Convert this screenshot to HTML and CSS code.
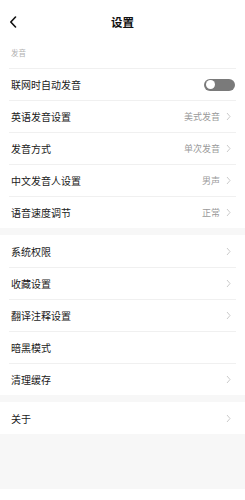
FILE: index.html
```html
<!DOCTYPE html>
<html lang="zh">
<head>
<meta charset="utf-8">
<link rel="stylesheet" href="styles.css">
</head>
<body>
<div class="page">
  <header class="header">
    <svg class="back" width="8" height="12" viewBox="0 0 8 12"><path d="M6.5 1 L1.8 6 L6.5 11" fill="none" stroke="#111" stroke-width="1.6" stroke-linecap="round" stroke-linejoin="round"/></svg>
    <div class="title">设置</div>
  </header>
  <section class="group">
    <div class="label">发音</div>
    <div class="row"><span class="name">联网时自动发音</span><span class="toggle"><span class="knob"></span></span></div>
    <div class="row"><span class="name">英语发音设置</span><span class="value">美式发音</span><svg class="chev" width="5" height="9" viewBox="0 0 5 9"><path d="M1 1 L4 4.5 L1 8" fill="none" stroke="#c4c4c4" stroke-width="0.9"/></svg></div>
    <div class="row"><span class="name">发音方式</span><span class="value">单次发音</span><svg class="chev" width="5" height="9" viewBox="0 0 5 9"><path d="M1 1 L4 4.5 L1 8" fill="none" stroke="#c4c4c4" stroke-width="0.9"/></svg></div>
    <div class="row"><span class="name">中文发音人设置</span><span class="value">男声</span><svg class="chev" width="5" height="9" viewBox="0 0 5 9"><path d="M1 1 L4 4.5 L1 8" fill="none" stroke="#c4c4c4" stroke-width="0.9"/></svg></div>
    <div class="row"><span class="name">语音速度调节</span><span class="value">正常</span><svg class="chev" width="5" height="9" viewBox="0 0 5 9"><path d="M1 1 L4 4.5 L1 8" fill="none" stroke="#c4c4c4" stroke-width="0.9"/></svg></div>
  </section>
  <section class="group">
    <div class="row first"><span class="name">系统权限</span><svg class="chev" width="5" height="9" viewBox="0 0 5 9"><path d="M1 1 L4 4.5 L1 8" fill="none" stroke="#c4c4c4" stroke-width="0.9"/></svg></div>
    <div class="row"><span class="name">收藏设置</span><svg class="chev" width="5" height="9" viewBox="0 0 5 9"><path d="M1 1 L4 4.5 L1 8" fill="none" stroke="#c4c4c4" stroke-width="0.9"/></svg></div>
    <div class="row"><span class="name">翻译注释设置</span><svg class="chev" width="5" height="9" viewBox="0 0 5 9"><path d="M1 1 L4 4.5 L1 8" fill="none" stroke="#c4c4c4" stroke-width="0.9"/></svg></div>
    <div class="row"><span class="name">暗黑模式</span></div>
    <div class="row"><span class="name">清理缓存</span><svg class="chev" width="5" height="9" viewBox="0 0 5 9"><path d="M1 1 L4 4.5 L1 8" fill="none" stroke="#c4c4c4" stroke-width="0.9"/></svg></div>
  </section>
  <section class="group">
    <div class="row first"><span class="name">关于</span><svg class="chev" width="5" height="9" viewBox="0 0 5 9"><path d="M1 1 L4 4.5 L1 8" fill="none" stroke="#c4c4c4" stroke-width="0.9"/></svg></div>
  </section>
  <div class="filler"></div>
</div>
</body>
</html>
```

FILE: styles.css
```css
html, body {
  margin: 0;
  padding: 0;
  background: #ffffff;
}
.page {
  width: 245px;
  height: 500px;
  display: flex;
  flex-direction: column;
  background: #f7f7f7;
  font-family: "Noto Sans CJK SC", "Noto Sans", sans-serif;
  overflow: hidden;
}
.header {
  height: 44px;
  background: #fff;
  display: flex;
  align-items: center;
  justify-content: center;
  position: relative;
}
.back {
  position: absolute;
  left: 9px;
  top: 16px;
}
.title {
  font-size: 11.5px;
  font-weight: 700;
  color: #111;
  line-height: 14px;
}
.group {
  background: #fff;
  margin-bottom: 7px;
}
.label {
  height: 24px;
  box-sizing: border-box;
  padding: 4px 0 0 11px;
  font-size: 7.5px;
  line-height: 10px;
  color: #b0b0b0;
}
.row {
  margin: 0 9px;
  height: 32px;
  box-sizing: border-box;
  border-top: 1px solid #f0f0f0;
  display: flex;
  align-items: center;
  padding: 0 5px 0 2px;
}
.row.first {
  border-top-color: #fff;
}
.name {
  flex: 1;
  font-size: 10px;
  color: #1a1a1a;
  line-height: 12px;
}
.value {
  font-size: 9px;
  color: #9a9a9a;
  line-height: 12px;
  margin-right: 6px;
}
.chev {
  display: block;
}
.toggle {
  width: 31px;
  height: 12px;
  border-radius: 6px;
  background: #7a7a7a;
  display: flex;
  align-items: center;
  padding: 0 1.5px;
  box-sizing: border-box;
  margin-right: -4px;
}
.knob {
  width: 9px;
  height: 9px;
  border-radius: 50%;
  background: #fff;
}
.filler {
  height: 48px;
  background: #f7f7f7;
}
.page::after {
  content: "";
  flex: 1;
  background: #fff;
}
```
